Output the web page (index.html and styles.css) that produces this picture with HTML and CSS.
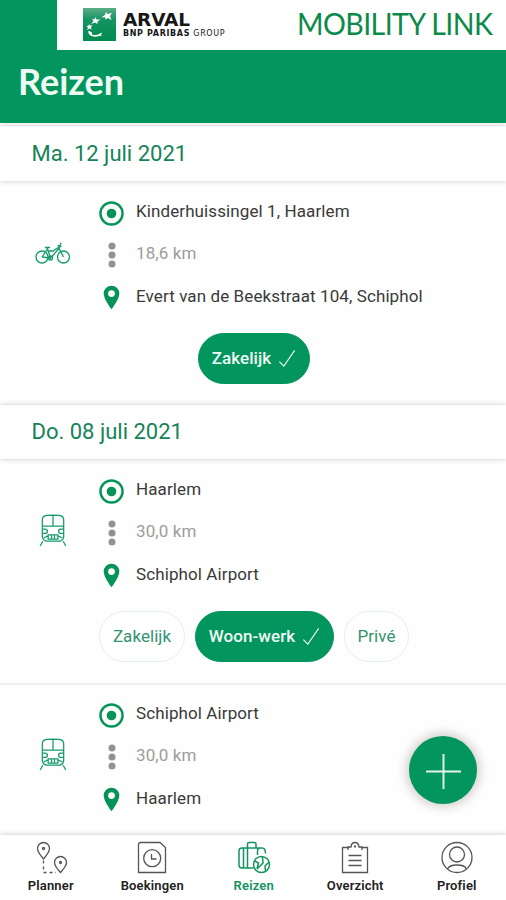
FILE: index.html
```html
<!DOCTYPE html>
<html lang="nl">
<head>
<meta charset="utf-8">
<title>Mobility Link – Reizen</title>
<link rel="stylesheet" href="styles.css">
</head>
<body>
<svg class="defs" aria-hidden="true">
  <symbol id="origin" viewBox="0 0 26 26"><circle cx="13" cy="13" r="11.500" fill="none" stroke="currentColor" stroke-width="2.500"/><circle cx="13" cy="13" r="5" fill="currentColor"/></symbol>
  <symbol id="dots" viewBox="0 0 8 26"><circle cx="4" cy="4" r="3.500"/><circle cx="4" cy="13" r="3.500"/><circle cx="4" cy="22" r="3.500"/></symbol>
  <symbol id="pin" viewBox="0 0 18 26"><path fill="currentColor" fill-rule="evenodd" d="M9 .5A8.300 8.300 0 0 0 .7 8.800C.7 15 9 25.500 9 25.500S17.300 15 17.300 8.800A8.300 8.300 0 0 0 9 .5ZM9 5.200a3.600 3.600 0 1 1 0 7.200a3.600 3.600 0 0 1 0-7.200Z"/></symbol>
  <symbol id="train" viewBox="0 0 28 34"><g fill="none" stroke="currentColor" stroke-width="1.300"><path d="M3 12V6Q3 2 7.500 1.500Q14 .7 20.500 1.500Q25 2 25 6V23Q25 27 21 28H7.500Q3 27 3 23V12M3 12.500H25M14 1.200V12.500M3 15.500H6a2 2 0 0 1 0 4.500H3M25 15.500h-3a2 2 0 0 0 0 4.500H25M4.500 24.500L9 22.500M19 22.500L23.500 24.500M9 21.500h10v4.500h-10zM12.500 21.500v4.500M15.500 21.500v4.500M3.500 28L.8 33M24.500 28L27.200 33"/></g></symbol>
  <symbol id="check" viewBox="0 0 20 20"><path d="M1.500 13.500L6.500 18.500L18.500 1" fill="none" stroke="currentColor" stroke-width="1.200"/></symbol>
</svg>

<header class="top">
  <div class="brandbar">
    <svg class="logo" viewBox="0 0 33 33">
      <defs><linearGradient id="lg" x1="0" y1="0" x2="0" y2="1"><stop offset="0" stop-color="#5bad88"/><stop offset=".35" stop-color="#159462"/><stop offset="1" stop-color="#008a50"/></linearGradient></defs>
      <path fill="url(#lg)" d="M0 0h33v33H0z"/>
      <g fill="#fff"><path d="M23 4l1.500 2 4.500-1-2 3 1.500 4-3.500-2-2.500 1.500-.5-2.500-4 .5 4-2.500z"/><path d="M12.500 9l1 2.500 4 0-3 2 0 2.500-2.500-1.500-4 1.500 2.500-3-1.500-2 2.500.3z"/><path d="M6 16l1 1.500 2.500-.5-1.500 2 .5 2.500-2-1-2.500 1.500 1-2.500-1.500-1.500 2-.3z"/><path d="M5 23q1 .5 2 0 .5 1 2 1.500l0 2q4 1.500 8-1l2-1-1 2.500 1 1-2.500-.3q-4 2-8 .3-3-1-3.500-5z"/></g>
    </svg>
    <div class="brand"><div class="arval">ARVAL</div><div class="bnp"><b>BNP PARIBAS</b> GROUP</div></div>
    <div class="product">MOBILITY LINK</div>
  </div>
  <h1>Reizen</h1>
</header>

<main>
  <h2>Ma. 12 juli 2021</h2>
  <section class="trip first">
    <div class="route">
      <svg class="mode bike" viewBox="0 0 36 22"><g fill="none" stroke="currentColor" stroke-width="1.300"><circle cx="7" cy="15" r="6"/><circle cx="28.500" cy="15" r="6"/><circle cx="15.500" cy="16" r="2"/><path d="M7 15L12.500 7L15.500 16L24 6.500L28.500 15M7 15L15 16M12.500 9L18 9L24 5M10 5.500h5M12.500 7l-.5-1.500M24 6.500L26 .8M22.500 3.500l4 1"/></g></svg>
      <div class="stop"><svg class="o"><use href="#origin"/></svg><span>Kinderhuissingel 1, Haarlem</span></div>
      <div class="stop km"><svg class="d"><use href="#dots"/></svg><span>18,6 km</span></div>
      <div class="stop"><svg class="p"><use href="#pin"/></svg><span>Evert van de Beekstraat 104, Schiphol</span></div>
    </div>
    <div class="chips"><button class="on z">Zakelijk<svg><use href="#check"/></svg></button></div>
  </section>

  <h2 class="second">Do. 08 juli 2021</h2>
  <section class="trip">
    <div class="route">
      <svg class="mode train"><use href="#train"/></svg>
      <div class="stop"><svg class="o"><use href="#origin"/></svg><span>Haarlem</span></div>
      <div class="stop km"><svg class="d"><use href="#dots"/></svg><span>30,0 km</span></div>
      <div class="stop"><svg class="p"><use href="#pin"/></svg><span>Schiphol Airport</span></div>
    </div>
    <div class="chips"><button class="za">Zakelijk</button><button class="on w">Woon-werk<svg><use href="#check"/></svg></button><button class="pr">Privé</button></div>
  </section>

  <section class="trip last">
    <div class="route">
      <svg class="mode train"><use href="#train"/></svg>
      <div class="stop"><svg class="o"><use href="#origin"/></svg><span>Schiphol Airport</span></div>
      <div class="stop km"><svg class="d"><use href="#dots"/></svg><span>30,0 km</span></div>
      <div class="stop"><svg class="p"><use href="#pin"/></svg><span>Haarlem</span></div>
    </div>
  </section>
</main>

<button class="fab" aria-label="Nieuw"><svg viewBox="0 0 36 36"><path d="M18 0V36M0 18H36" stroke="#e4f5ec" stroke-width="2"/></svg></button>

<nav>
  <a><svg viewBox="0 0 34 34"><path d="M9.500 18Q3.500 11 3.500 7.500a6 6 0 0 1 12 0Q15.500 11 9.500 18ZM26.500 31.500Q20.500 25 20.500 21.500a6 6 0 0 1 12 0Q32.500 25 26.500 31.500Z"/><circle cx="9.500" cy="7.500" r="1"/><circle cx="26.500" cy="21.500" r="1"/><path d="M9.500 19.500v12H22" stroke-dasharray="3 3"/></svg>Planner</a>
  <a><svg viewBox="0 0 34 34"><path d="M5.500 1.500H25L30.500 6.500V31.500H3.500V3.500Q3.500 1.500 5.500 1.500Z"/><circle cx="17.200" cy="17.200" r="8.500"/><path d="M16.500 13V18H21.500"/></svg>Boekingen</a>
  <a class="active"><svg viewBox="0 0 34 34"><path d="M16.500 27H5Q2 27 2 24V10Q2 7 5 7H25Q28.500 7 28.500 12.500M6.500 7V27M10.500 7V27M20.500 14V10Q20.500 7 23 7M10.500 7V3Q10.500 1.500 12 1.500H17.500Q19 1.500 19 3V7"/><circle cx="24.500" cy="23.500" r="8"/><path d="M17.500 20L21.500 22L20 28M20 28L26 22L25.500 16M32 21L28 25L28.500 30"/></svg>Reizen</a>
  <a><svg viewBox="0 0 34 34"><path d="M11 6.500H4.500V31.500H29.500V6.500H23M10 9V6H13Q13.500 1.500 17 1.500T21 6H24V9M10.500 14.500H23.500M10.500 19.500H23.500M10.500 24.500H23.500"/><circle cx="17" cy="5.500" r=".5"/></svg>Overzicht</a>
  <a><svg viewBox="0 0 34 34"><circle cx="17" cy="16.500" r="15"/><circle cx="17" cy="13.500" r="7.500"/><path d="M7.500 28Q9 24 17 24T26.500 28"/></svg>Profiel</a>
</nav>
</body>
</html>
```
FILE: styles.css
```css
* { box-sizing: border-box; }
body { margin: 0; width: 506px; height: 900px; overflow: hidden; display: flex; flex-direction: column; background: #fefefe; font-family: Roboto, sans-serif; color: #333; }
.defs { position: absolute; width: 0; height: 0; }
button { font: inherit; border: 0; padding: 0; }
.top { height: 123px; background: #02965e; flex: none; }
.brandbar { margin-left: 57px; height: 50px; background: #fff; display: flex; align-items: flex-start; }
.logo { width: 33px; height: 33px; margin: 8px 0 0 26px; flex: none; }
.brand { width: 174px; flex: none; margin: 11px 0 0 7px; color: #171717; white-space: nowrap; }
.arval { font: bold 18.500px/18px "DejaVu Sans", sans-serif; letter-spacing: -.2px; }
.bnp { font: 8px/9px "DejaVu Sans", sans-serif; letter-spacing: .65px; }
.product { font: 30px/36px Lato, sans-serif; color: #0b8a4a; margin-top: 5px; white-space: nowrap; letter-spacing: -.6px; transform: scaleX(.952); transform-origin: left; }
h1 { margin: 11px 0 0 18px; font: bold 36px/40px Lato, sans-serif; color: #effaf3; }
main { flex: 1; overflow: hidden; }
h2 { position: relative; margin: 3px 0 0; height: 55px; padding-left: 31.500px; font-size: 22px; line-height: 55px; font-weight: 400; color: #148457; background: #fff; box-shadow: 0 0 5px rgba(0,0,0,.22); }
h2.second { margin-top: 0; height: 54px; line-height: 53px; }
.trip { height: 224px; padding: 10px 0 0 99px; }
.trip.last { height: 152px; border-top: 2px solid #eee; padding-top: 8px; }
.route { position: relative; }
.stop { height: 42.500px; display: flex; align-items: center; font-size: 17px; letter-spacing: .1px; gap: 12px; white-space: nowrap; color: #3a3a3a; }
.stop span { position: relative; top: -1px; }
.stop.km span { top: -1.500px; }
.stop svg { color: #069357; flex: none; }
.stop.km { color: #9c9c9c; }
.o { width: 25px; height: 25px; margin-top: 2px; }
.d { width: 8px; height: 26px; margin: 0 8.500px; fill: #929292; }
.p { width: 17px; height: 25px; margin: 1px 4px 0; }
.mode { position: absolute; color: #159c69; }
.bike { left: -64px; top: 51px; width: 36px; height: 22px; }
.train { left: -60px; top: 45px; width: 28px; height: 33px; }
.chips { display: flex; justify-content: center; gap: 10px; margin: 14px 97px 0 0; }
.chips button { height: 51px; border-radius: 26px; border: 1px solid #e6f0eb; background: #fff; color: #329371; font-size: 17px; letter-spacing: .05px; display: flex; justify-content: center; align-items: center; flex: none; }
.chips .on { background: #02965e; border-color: #02965e; color: #f0fbf5; font-weight: 500; }
.chips svg { width: 18px; height: 19px; margin-left: 7px; }
.z { width: 112px; }
.za { width: 86px; }
.w { width: 139px; }
.pr { width: 65px; }
.fab { position: absolute; left: 409px; top: 736px; width: 68px; height: 68px; border-radius: 50%; background: #02965e; box-shadow: 0 0 9px 4px rgba(90,70,70,.22); display: flex; justify-content: center; align-items: center; }
.fab svg { width: 35px; height: 35px; position: relative; top: 1px; }
nav { position: relative; height: 65px; flex: none; display: grid; grid-template-columns: repeat(5, 101.500px); background: #fff; box-shadow: 0 -1px 4px rgba(0,0,0,.18); }
nav a { display: flex; flex-direction: column; align-items: center; padding-top: 6px; font-size: 13px; line-height: 18px; font-weight: 600; letter-spacing: .15px; color: #222; }
nav svg { width: 34px; height: 34px; margin-bottom: 2px; fill: none; stroke: #555; stroke-width: 1.300; }
nav .active { color: #12945f; }
nav .active svg { stroke: #12945f; stroke-width: 1.500; }
```
